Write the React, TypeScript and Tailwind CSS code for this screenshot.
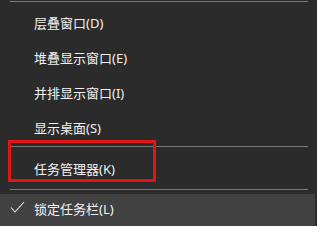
import React from "react";

const items = ["层叠窗口(D)", "堆叠显示窗口(E)", "并排显示窗口(I)", "显示桌面(S)"];

const Separator = () => <div className="ml-[10px] mr-[9px] h-px bg-[#7a7a7a]" />;

const App: React.FC = () => {
	return (
		<div
			className="relative w-[317px] h-[226px] overflow-hidden bg-[#2b2b2b] text-[#f2f2f2] text-[13px]"
			style={{ fontFamily: '"Noto Sans", "Noto Sans CJK SC", sans-serif' }}>
			<div className="pt-[1px]">
				<Separator />
			</div>
			<div className="pt-[4px]">
				{items.map((label) => (
					<div key={label} className="h-[35px] flex items-center pl-[34px]">
						{label}
					</div>
				))}
			</div>
			<Separator />
			<div className="h-[42px] flex items-center pl-[34px] pt-[3px]">任务管理器(K)</div>
			<Separator />
			<div className="mt-[4px] mr-[2px] h-[32px] flex items-center bg-[#414141]">
				<svg width="34" height="32" viewBox="0 0 34 32" className="shrink-0">
					<path d="M11 13.5 L15 18 L24 8" fill="none" stroke="#e8e8e8" strokeWidth="1.1" />
				</svg>
				<span>锁定任务栏(L)</span>
			</div>
			{/* highlight annotation */}
			<div className="absolute left-[8px] top-[140px] w-[148px] h-[42px] border-[3px] border-[#e31414]" />
		</div>
	);
};

export default App;
